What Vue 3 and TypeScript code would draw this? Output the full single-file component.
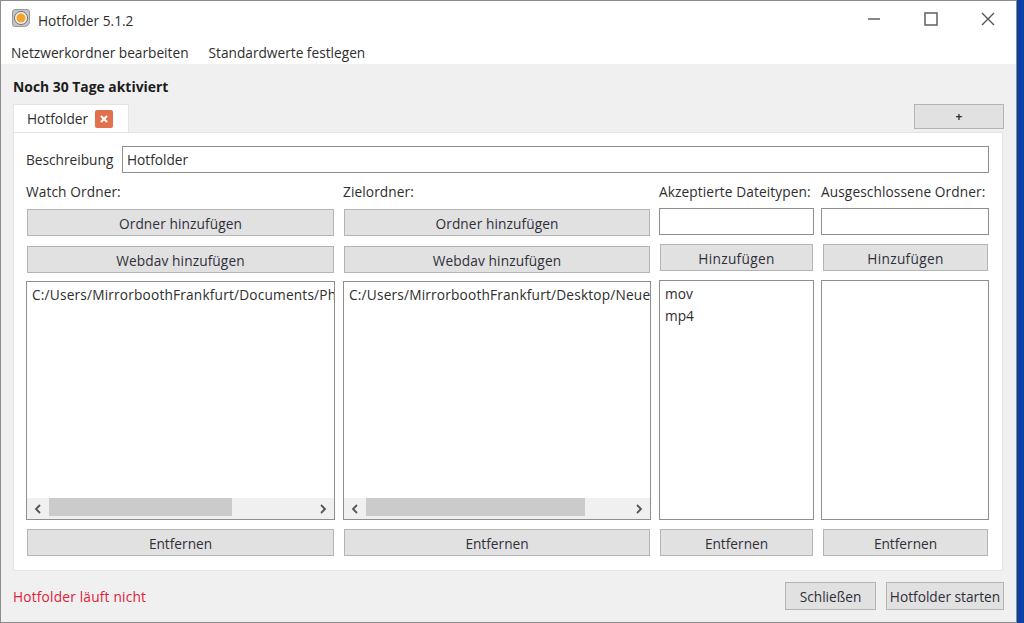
<script setup lang="ts">
interface Column {
  title: string
  kind: 'folder' | 'text'
  items: string[]
  thumbWidth?: number
}

const columns: Column[] = [
  { title: 'Watch Ordner:', kind: 'folder', items: ['C:/Users/MirrorboothFrankfurt/Documents/Ph'], thumbWidth: 183 },
  { title: 'Zielordner:', kind: 'folder', items: ['C:/Users/MirrorboothFrankfurt/Desktop/Neue'], thumbWidth: 219 },
  { title: 'Akzeptierte Dateitypen:', kind: 'text', items: ['mov', 'mp4'] },
  { title: 'Ausgeschlossene Ordner:', kind: 'text', items: [] },
]
</script>

<template>
  <div class="window">
    <header class="titlebar">
      <svg class="app-icon" width="18" height="19" viewBox="0 0 18 19">
        <path d="M3 .5h12a2.500 2.500 0 0 1 2.500 2.500v9.500a5 5 0 0 1-5 5H3a2.500 2.500 0 0 1-2.500-2.500V3A2.500 2.500 0 0 1 3 .5z" fill="#c4c4c4" stroke="#9a9a9a" />
        <circle cx="9" cy="9" r="6.500" fill="#f4f4f4" stroke="#6f6f6f" />
        <circle cx="9" cy="9" r="4.500" fill="#f4a42c" />
      </svg>
      <span class="app-title">Hotfolder 5.1.2</span>
      <div class="caption">
        <svg width="14" height="14" viewBox="0 0 14 14"><path d="M1 7h12" stroke="#555" stroke-width="1.400" /></svg>
        <svg width="14" height="14" viewBox="0 0 14 14"><rect x="1" y="1" width="12" height="12" fill="none" stroke="#555" stroke-width="1.400" /></svg>
        <svg width="14" height="14" viewBox="0 0 14 14"><path d="M1 1l12 12M13 1L1 13" stroke="#555" stroke-width="1.400" /></svg>
      </div>
    </header>

    <nav class="menubar">
      <span>Netzwerkordner bearbeiten</span>
      <span>Standardwerte festlegen</span>
    </nav>

    <main class="content">
      <div class="notice">Noch 30 Tage aktiviert</div>

      <div class="tabbar">
        <div class="tab">
          <span>Hotfolder</span>
          <span class="tab-close">
            <svg width="10" height="10" viewBox="0 0 10 10"><path d="M2 2l6 6M8 2L2 8" stroke="#fff" stroke-width="2" /></svg>
          </span>
        </div>
        <button class="btn add-tab" type="button">+</button>
      </div>

      <section class="panel">
        <div class="desc-row">
          <label class="desc-label">Beschreibung</label>
          <div class="field desc-field">Hotfolder</div>
        </div>

        <div class="columns">
          <div v-for="col in columns" :key="col.title" class="col" :class="col.kind">
            <div class="col-title">{{ col.title }}</div>
            <template v-if="col.kind === 'folder'">
              <button class="btn action" type="button">Ordner hinzufügen</button>
              <button class="btn action" type="button">Webdav hinzufügen</button>
            </template>
            <template v-else>
              <div class="field small-field"></div>
              <button class="btn action" type="button">Hinzufügen</button>
            </template>

            <div class="list">
              <div class="list-items">
                <div v-for="item in col.items" :key="item" class="list-item">{{ item }}</div>
              </div>
              <div v-if="col.thumbWidth" class="scrollbar">
                <svg class="arrow" width="8" height="10" viewBox="0 0 8 10"><path d="M6 1L2 5l4 4" fill="none" stroke="#555" stroke-width="1.800" /></svg>
                <div class="track">
                  <div class="thumb" :style="{ width: col.thumbWidth + 'px' }"></div>
                </div>
                <svg class="arrow" width="8" height="10" viewBox="0 0 8 10"><path d="M2 1l4 4-4 4" fill="none" stroke="#555" stroke-width="1.800" /></svg>
              </div>
            </div>

            <button class="btn action remove" type="button">Entfernen</button>
          </div>
        </div>
      </section>

      <footer class="footer">
        <span class="status">Hotfolder läuft nicht</span>
        <div class="footer-actions">
          <button class="btn close-btn" type="button">Schließen</button>
          <button class="btn start-btn" type="button">Hotfolder starten</button>
        </div>
      </footer>
    </main>
  </div>
</template>

<style>
html, body {
  margin: 0;
  background: #0c3fa3;
  overflow: hidden;
}
</style>

<style scoped>
.window {
  box-sizing: border-box;
  width: 1017px;
  height: 623px;
  border: 1px solid #8c8c8c;
  background: #f0f0f0;
  display: flex;
  flex-direction: column;
  font-family: "Open Sans", "Noto Sans", sans-serif;
  font-size: 13.700px;
  color: #2e2e2e;
}

.titlebar {
  height: 35px;
  background: #fff;
  display: flex;
  align-items: center;
  padding: 0 0 0 11px;
  flex: none;
}

.app-icon { flex: none; }

.app-title {
  margin-left: 8px;
  margin-top: 3px;
}

.caption {
  margin-left: auto;
  display: flex;
  gap: 43px;
  padding-right: 21px;
}

.menubar {
  height: 28px;
  background: #fff;
  display: flex;
  gap: 20px;
  padding: 0 0 0 10px;
  flex: none;
  align-items: flex-start;
  line-height: 34px;
}

.content {
  flex: 1;
  display: flex;
  flex-direction: column;
  padding: 0 12px;
  min-height: 0;
}

.notice {
  font-size: 13.900px;
  font-weight: 700;
  color: #1c1c1c;
  height: 40px;
  line-height: 46px;
  flex: none;
}

.tabbar {
  height: 28px;
  display: flex;
  justify-content: space-between;
  flex: none;
}

.tab {
  width: 116px;
  box-sizing: border-box;
  background: #fff;
  border: 1px solid #e4e4e4;
  border-bottom: none;
  display: flex;
  align-items: center;
  gap: 7px;
  padding-left: 13px;
  position: relative;
  z-index: 1;
}

.tab-close {
  width: 18px;
  height: 18px;
  border-radius: 2px;
  background: #e2704f;
  display: flex;
  align-items: center;
  justify-content: center;
}

.btn {
  box-sizing: border-box;
  background: #e1e1e1;
  border: 1px solid #b4b4b4;
  font: inherit;
  color: #2f2f3a;
  padding: 0;
  display: block;
}

.add-tab {
  width: 90px;
  height: 25px;
  font-size: 12px;
  font-weight: 700;
}

.panel {
  box-sizing: border-box;
  width: 990px;
  height: 439px;
  background: #fff;
  border: 1px solid #e4e4e4;
  padding: 12px 13px 0 12px;
  flex: none;
}

.desc-row {
  display: flex;
  align-items: center;
  gap: 7px;
  height: 28px;
}

.desc-label { flex: none; width: 89px; white-space: nowrap; padding-top: 1px; }

.field {
  box-sizing: border-box;
  background: #fff;
  border: 1px solid #8e8e8e;
}

.desc-field {
  flex: 1;
  height: 27px;
  line-height: 26px;
  padding-left: 4px;
}

.columns {
  display: grid;
  grid-template-columns: 309px 308px 155px 168px;
  column-gap: 8px;
  margin-top: 7px;
}

.columns .col:last-child { margin-left: -1px; margin-right: 1px; }

.col {
  display: flex;
  flex-direction: column;
  min-width: 0;
}

.col-title {
  height: 29px;
  line-height: 23px;
  white-space: nowrap;
  letter-spacing: 0.1px;
}

.col .action {
  margin-left: 1px;
  margin-right: 1px;
  height: 27px;
  padding-top: 1px;
  letter-spacing: 0.1px;
}

.columns .col:last-child .action { margin-left: 2px; }

.folder .action + .action { margin-top: 10px; }
.folder .list { margin-top: 8px; height: 239px; }

.text .small-field {
  height: 27px;
  margin-top: -1px;
}
.text .action { margin-top: 9px; letter-spacing: 0.3px; }
.text .list { margin-top: 9px; height: 240px; }

.col .remove { margin-top: 9px; letter-spacing: 0; }

.list {
  box-sizing: border-box;
  background: #fff;
  border: 1px solid #8e8e8e;
  display: flex;
  flex-direction: column;
  overflow: hidden;
}

.list-items {
  flex: 1;
  padding: 2px 0 0 5px;
  overflow: hidden;
  min-height: 0;
}

.list-item {
  height: 22px;
  line-height: 22px;
  white-space: nowrap;
}

.folder .list-item { letter-spacing: 0.18px; }

.scrollbar {
  height: 21px;
  background: #f0f0f0;
  display: flex;
  align-items: center;
  padding: 0 7px;
  flex: none;
}

.arrow { flex: none; }

.track {
  flex: 1;
  height: 100%;
  padding-left: 7px;
  display: flex;
  align-items: flex-start;
  min-width: 0;
}

.thumb {
  height: 18px;
  background: #cbcbcb;
}

.footer {
  flex: 1;
  display: flex;
  justify-content: space-between;
  align-items: flex-start;
  width: 991px;
  padding-top: 11px;
}

.status {
  color: #e0203a;
  line-height: 30px;
  letter-spacing: 0.2px;
}

.footer-actions {
  display: flex;
  gap: 10px;
}

.close-btn {
  width: 91px;
  height: 28px;
}

.start-btn {
  width: 118px;
  height: 28px;
  white-space: nowrap;
}
</style>
